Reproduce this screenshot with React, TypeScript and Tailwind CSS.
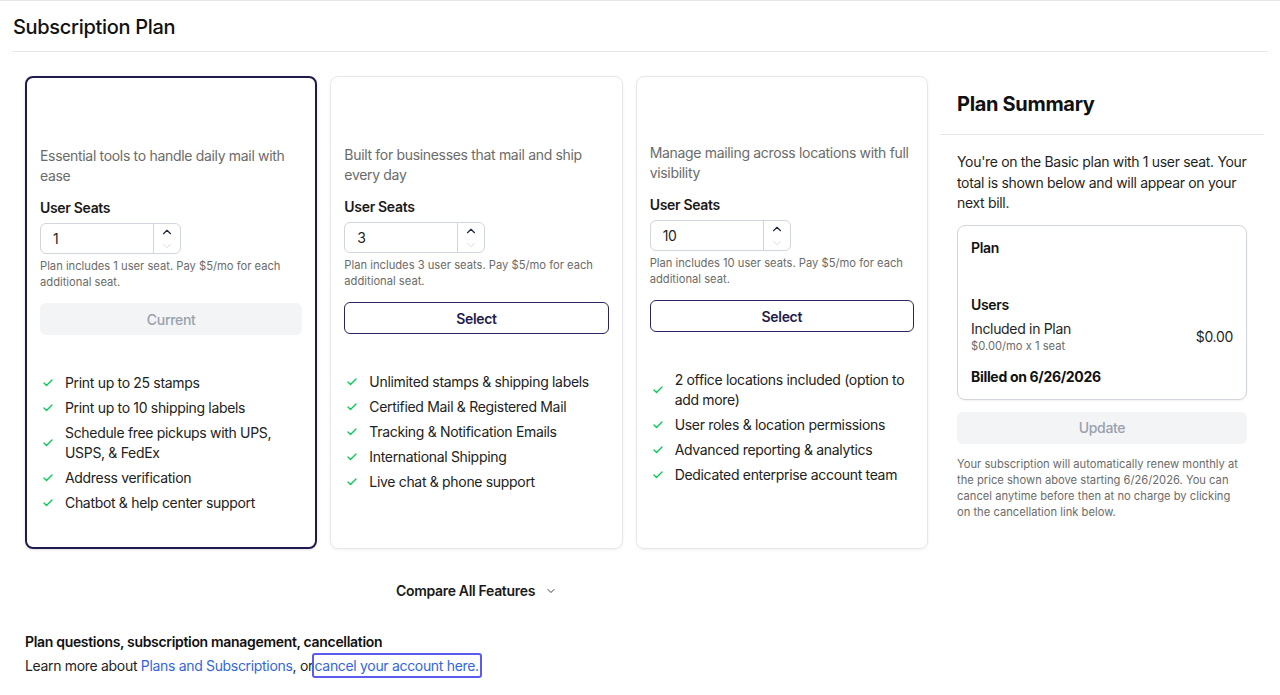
import { ChevronDown, ChevronUp, Check } from 'lucide-react';

type Plan = {
  desc: string;
  seats: string;
  note: string;
  current?: boolean;
  top: string;
  features: string[];
};

const plans: Plan[] = [
  {
    desc: 'Essential tools to handle daily mail with ease',
    seats: '1',
    note: 'Plan includes 1 user seat. Pay $5/mo for each additional seat.',
    current: true,
    top: 'pt-[68px]',
    features: [
      'Print up to 25 stamps',
      'Print up to 10 shipping labels',
      'Schedule free pickups with UPS, USPS, & FedEx',
      'Address verification',
      'Chatbot & help center support',
    ],
  },
  {
    desc: 'Built for businesses that mail and ship every day',
    seats: '3',
    note: 'Plan includes 3 user seats. Pay $5/mo for each additional seat.',
    top: 'pt-[68px]',
    features: [
      'Unlimited stamps & shipping labels',
      'Certified Mail & Registered Mail',
      'Tracking & Notification Emails',
      'International Shipping',
      'Live chat & phone support',
    ],
  },
  {
    desc: 'Manage mailing across locations with full visibility',
    seats: '10',
    note: 'Plan includes 10 user seats. Pay $5/mo for each additional seat.',
    top: 'pt-[66px]',
    features: [
      '2 office locations included (option to add more)',
      'User roles & location permissions',
      'Advanced reporting & analytics',
      'Dedicated enterprise account team',
    ],
  },
];

function SeatInput({ value }: { value: string }) {
  return (
    <div className="mt-[5px] flex h-[31px] w-[141px] rounded-md border border-gray-300 bg-white">
      <div className="flex flex-1 items-center pl-3 text-[14px] text-[#1f1f1f]">{value}</div>
      <div className="flex w-[27px] flex-col items-center justify-center border-l border-gray-300">
        <ChevronUp className="h-3.5 w-3.5 text-gray-800" strokeWidth={2} />
        <ChevronDown className="h-3.5 w-3.5 text-gray-300" strokeWidth={1.5} />
      </div>
    </div>
  );
}

function PlanCard({ plan }: { plan: Plan }) {
  return (
    <div
      className={`flex flex-col rounded-lg px-[13px] ${plan.top} ${
        plan.current
          ? 'border-2 border-[#1f1b4d] shadow-sm'
          : 'border border-gray-200 shadow-[0_1px_3px_rgba(0,0,0,0.06)]'
      }`}
    >
      <p className="text-[14px] leading-[20px] text-[#6b6b6b]">{plan.desc}</p>
      <p className="mt-3 text-[14px] font-semibold leading-[20px] text-[#1a1a1a]">User Seats</p>
      <SeatInput value={plan.seats} />
      <p className="mt-1 text-[11.2px] leading-[16px] tracking-normal text-[#6b6b6b]">{plan.note}</p>
      {plan.current ? (
        <button className="mt-[13px] h-8 w-full rounded-md bg-gray-100 text-[14px] font-medium text-gray-400">
          Current
        </button>
      ) : (
        <button className="mt-[13px] h-8 w-full rounded-md border border-[#2a2560] bg-white text-[14px] font-semibold text-[#1f1b4d]">
          Select
        </button>
      )}
      <ul className="mt-[38px] flex flex-col gap-[5px]">
        {plan.features.map((f) => (
          <li key={f} className="flex items-center gap-[11px] pl-[2px]">
            <Check className="h-3 w-3 shrink-0 text-green-500" strokeWidth={2.5} />
            <span className="text-[14px] leading-[20px] text-[#222]">{f}</span>
          </li>
        ))}
      </ul>
    </div>
  );
}

function Summary() {
  return (
    <div className="flex flex-col">
      <h2 className="px-[17px] pt-[14px] text-[20px] font-bold leading-[28px] text-[#111]">Plan Summary</h2>
      <div className="mt-[16px] border-t border-gray-200" />
      <div className="px-[17px]">
        <p className="mt-[17px] text-[14px] leading-[20.5px] text-[#1f1f1f]">
          You're on the Basic plan with 1 user seat. Your total is shown below and will appear on your next bill.
        </p>
        <div className="mt-[11px] rounded-lg border border-gray-300 px-[13px] pt-[12px] pb-[12px] shadow-[0_1px_2px_rgba(0,0,0,0.05)]">
          <p className="text-[14px] font-semibold leading-[20px] text-[#111]">Plan</p>
          <p className="mt-[37px] text-[14px] font-semibold leading-[20px] text-[#111]">Users</p>
          <div className="mt-1 flex items-center justify-between">
            <div>
              <p className="text-[14px] leading-[20px] text-[#1f1f1f]">Included in Plan</p>
              <p className="text-[11.2px] leading-[15px] tracking-normal text-[#6b6b6b]">$0.00/mo x 1 seat</p>
            </div>
            <p className="text-[14px] text-[#1f1f1f]">$0.00</p>
          </div>
          <p className="mt-[13px] text-[14px] font-bold leading-[20px] text-[#111]">Billed on 6/26/2026</p>
        </div>
        <button className="mt-[12px] h-8 w-full rounded-md bg-gray-100 text-[14px] font-medium text-gray-400">
          Update
        </button>
        <p className="mt-3 pr-1 text-[11.2px] leading-[16.3px] tracking-normal text-[#6b6b6b]">
          Your subscription will automatically renew monthly at the price shown above starting 6/26/2026. You can
          cancel anytime before then at no charge by clicking on the cancellation link below.
        </p>
      </div>
    </div>
  );
}

export default function App() {
  return (
    <div
      className="h-[695px] w-full overflow-hidden border-t border-gray-200 bg-white tracking-[-0.02em]"
      style={{ fontFamily: 'Inter, "Noto Sans", sans-serif' }}
    >
      {/* Header */}
      <div className="mx-3 border-b border-gray-200 pt-[13px] pb-[11px]">
        <h1 className="pl-px text-[20px] font-medium leading-[26px] text-[#111]">Subscription Plan</h1>
      </div>

      <div className="flex gap-3 pl-[25px] pt-[24px]">
        <div className="w-[903px]">
          <div className="grid h-[473px] grid-cols-3 gap-[13px]">
            {plans.map((p) => (
              <PlanCard key={p.seats} plan={p} />
            ))}
          </div>
          <div className="mt-[31px] flex items-center justify-center gap-2.5">
            <span className="text-[14px] font-semibold text-[#1a1a1a]">Compare All Features</span>
            <ChevronDown className="h-3 w-3 text-gray-700" strokeWidth={2} />
          </div>
        </div>
        <div className="w-[324px]">
          <Summary />
        </div>
      </div>

      {/* Footer */}
      <div className="pl-[25px] pt-[31px]">
        <p className="text-[14px] font-semibold leading-[20px] text-[#111]">
          Plan questions, subscription management, cancellation
        </p>
        <p className="mt-1 text-[14px] leading-[20px] text-[#1f1f1f]">
          Learn more about <a className="text-[#3366dd]">Plans and Subscriptions</a>, or{' '}
          <a className="-ml-[3px] rounded-[1px] px-[1px] py-[2px] text-[#3366dd] outline-2 outline-[#5b5bf0]">
            cancel your account here.
          </a>
        </p>
      </div>
    </div>
  );
}
